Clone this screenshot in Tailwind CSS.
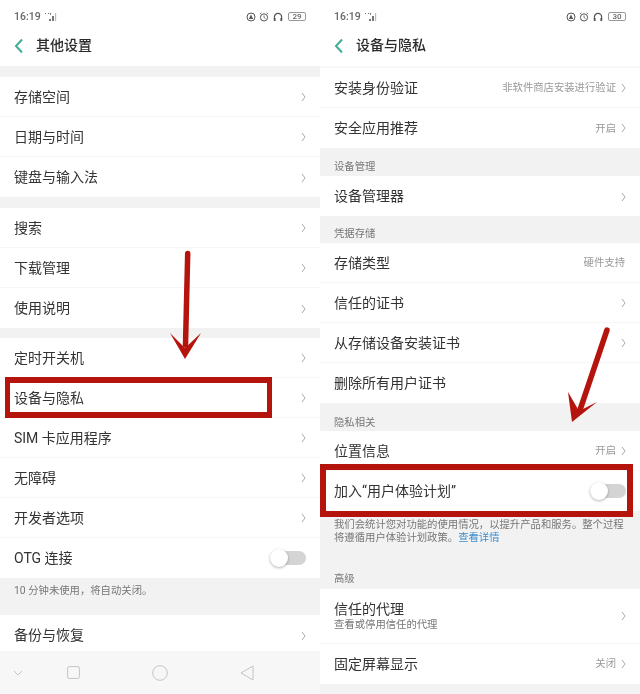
<!DOCTYPE html>
<html lang="zh"><head><meta charset="utf-8"><script src="https://cdn.jsdelivr.net/npm/@tailwindcss/browser@4"></script></head>
<body class="m-0 bg-white">
<div class="relative w-[640px] h-[694px] overflow-hidden flex blur-[0.35px] font-['Roboto','Noto_Sans_CJK_SC',sans-serif] text-[#333]">

<!-- LEFT -->
<section class="relative w-[320px] h-[694px] overflow-hidden flex flex-col bg-[#f2f2f2]">
  <div class="bg-white h-[66px] shrink-0 px-[14px] flex flex-col">
    <div class="h-[33px] flex items-center text-[10.5px] font-medium text-[#666]">
      <span>16:19</span>
      <svg class="ml-[3px]" width="14" height="10" viewBox="0 0 14 10"><g fill="#777"><rect x="1" y="1" width="1" height="1"/><rect x="4" y="1" width="1" height="1"/><rect x="6" y="1" width="1" height="2"/><rect x="5" y="7" width="2" height="2"/><rect x="8" y="4" width="2" height="5"/><rect x="11" y="1" width="1.2" height="8" fill="#bbb"/></g></svg>
      <div class="ml-auto flex items-center gap-[3px]">
        <svg width="10" height="10" viewBox="0 0 10 10"><circle cx="5" cy="5" r="4" fill="none" stroke="#555"/><path d="M2.8 7h4.4L5 2.6z" fill="#555"/></svg>
        <svg width="10" height="10" viewBox="0 0 10 10"><circle cx="5" cy="5.4" r="3.6" fill="none" stroke="#555"/><path d="M5 3.5v2l1.4 1M.8 2 2.4.6M9.2 2 7.6.6" fill="none" stroke="#555" stroke-width=".8"/></svg>
        <svg width="10" height="10" viewBox="0 0 10 10" class="ml-[1px]"><path d="M1.4 7V5a3.6 3.6 0 0 1 7.2 0v2" fill="none" stroke="#555" stroke-width="1.2"/><rect x=".8" y="6" width="1.8" height="3" fill="#555"/><rect x="7.4" y="6" width="1.8" height="3" fill="#555"/></svg>
        <span class="ml-[2px] w-[18px] h-[9px] border border-[#999] rounded-[2px] text-[8px] leading-[7px] text-center text-[#666]">29</span>
      </div>
    </div>
    <div class="h-[25px] flex items-center">
      <svg width="10" height="16" viewBox="0 0 10 16"><path d="M8 1.5 2 8l6 6.5" fill="none" stroke="#3fae96" stroke-width="2"/></svg>
      <span class="ml-[12px] text-[14px] font-medium text-[#2b2b2b]">其他设置</span>
    </div>
  </div>
  <div class="h-[11px] shrink-0"></div>
  <div class="bg-white flex flex-col divide-y divide-[#f7f7f7] shrink-0">
    <div class="h-10 pt-[1px] flex items-center pl-[14px] pr-[14px] justify-between text-[14px]"><span>存储空间</span><svg width="5" height="10" viewBox="0 0 5 10"><path d="M1 1l3 4-3 4" fill="none" stroke="#aaa"/></svg></div>
    <div class="h-10 pt-[1px] flex items-center pl-[14px] pr-[14px] justify-between text-[14px]"><span>日期与时间</span><svg width="5" height="10" viewBox="0 0 5 10"><path d="M1 1l3 4-3 4" fill="none" stroke="#aaa"/></svg></div>
    <div class="h-10 pt-[1px] flex items-center pl-[14px] pr-[14px] justify-between text-[14px]"><span>键盘与输入法</span><svg width="5" height="10" viewBox="0 0 5 10"><path d="M1 1l3 4-3 4" fill="none" stroke="#aaa"/></svg></div>
  </div>
  <div class="h-[11px] shrink-0"></div>
  <div class="bg-white flex flex-col divide-y divide-[#f7f7f7] shrink-0">
    <div class="h-10 pt-[1px] flex items-center pl-[14px] pr-[14px] justify-between text-[14px]"><span>搜索</span><svg width="5" height="10" viewBox="0 0 5 10"><path d="M1 1l3 4-3 4" fill="none" stroke="#aaa"/></svg></div>
    <div class="h-10 pt-[1px] flex items-center pl-[14px] pr-[14px] justify-between text-[14px]"><span>下载管理</span><svg width="5" height="10" viewBox="0 0 5 10"><path d="M1 1l3 4-3 4" fill="none" stroke="#aaa"/></svg></div>
    <div class="h-10 pt-[1px] flex items-center pl-[14px] pr-[14px] justify-between text-[14px]"><span>使用说明</span><svg width="5" height="10" viewBox="0 0 5 10"><path d="M1 1l3 4-3 4" fill="none" stroke="#aaa"/></svg></div>
  </div>
  <div class="h-[10px] shrink-0"></div>
  <div class="bg-white flex flex-col divide-y divide-[#f7f7f7] shrink-0">
    <div class="h-10 pt-[1px] flex items-center pl-[14px] pr-[14px] justify-between text-[14px]"><span>定时开关机</span><svg width="5" height="10" viewBox="0 0 5 10"><path d="M1 1l3 4-3 4" fill="none" stroke="#aaa"/></svg></div>
    <div class="h-10 pt-[1px] flex items-center pl-[14px] pr-[14px] justify-between text-[14px]"><span>设备与隐私</span><svg width="5" height="10" viewBox="0 0 5 10"><path d="M1 1l3 4-3 4" fill="none" stroke="#aaa"/></svg></div>
    <div class="h-10 pt-[1px] flex items-center pl-[14px] pr-[14px] justify-between text-[14px]"><span>SIM 卡应用程序</span><svg width="5" height="10" viewBox="0 0 5 10"><path d="M1 1l3 4-3 4" fill="none" stroke="#aaa"/></svg></div>
    <div class="h-10 pt-[1px] flex items-center pl-[14px] pr-[14px] justify-between text-[14px]"><span>无障碍</span><svg width="5" height="10" viewBox="0 0 5 10"><path d="M1 1l3 4-3 4" fill="none" stroke="#aaa"/></svg></div>
    <div class="h-10 pt-[1px] flex items-center pl-[14px] pr-[14px] justify-between text-[14px]"><span>开发者选项</span><svg width="5" height="10" viewBox="0 0 5 10"><path d="M1 1l3 4-3 4" fill="none" stroke="#aaa"/></svg></div>
    <div class="h-10 flex items-center pl-[14px] pr-[14px] justify-between text-[14px]"><span>OTG 连接</span>
      <div class="relative w-[36px] h-[14px] rounded-full bg-[#d4d4d4]"><div class="absolute left-0 -top-[2px] w-[18px] h-[18px] rounded-full bg-white shadow-[0_1px_3px_rgba(0,0,0,.3)]"></div></div>
    </div>
  </div>
  <div class="h-[37px] shrink-0 pl-[14px] pt-[5px] text-[10.35px] leading-[16px] text-[#777]">10 分钟未使用，将自动关闭。</div>
  <div class="bg-white h-[36px] pt-[5px] shrink-0 flex items-center pl-[14px] pr-[14px] justify-between text-[14px]"><span>备份与恢复</span><svg width="5" height="10" viewBox="0 0 5 10"><path d="M1 1l3 4-3 4" fill="none" stroke="#aaa"/></svg></div>
  <div class="flex-1 bg-[#f7f7f7] flex items-center">
    <svg class="ml-[13px]" width="10" height="6" viewBox="0 0 10 6"><path d="M1 1l4 4 4-4" fill="none" stroke="#c4c4c4"/></svg>
    <svg class="ml-[44px]" width="13" height="13" viewBox="0 0 13 13"><rect x=".6" y=".6" width="11.8" height="11.8" rx="1.5" fill="none" stroke="#c4c4c4"/></svg>
    <svg class="ml-[72px]" width="16" height="16" viewBox="0 0 16 16"><circle cx="8" cy="8" r="7.3" fill="none" stroke="#c4c4c4"/></svg>
    <svg class="ml-[72px]" width="14" height="16" viewBox="0 0 14 16"><path d="M13 1v14L1 8z" fill="none" stroke="#c4c4c4"/></svg>
  </div>
  <!-- annotations -->
  <div class="absolute left-[5px] top-[377px] w-[267px] h-[41px] border-x-[5px] border-y-[6px] border-[#b5140c]"></div>
  <svg class="absolute left-[165px] top-[245px]" width="42" height="120" viewBox="0 0 42 120"><path d="M22.7 8.5 20.5 100" fill="none" stroke="#b5140c" stroke-width="5.5" stroke-linecap="round"/><path d="M5 88 20 114 36 88 20 103z" fill="#b5140c"/></svg>
</section>

<!-- RIGHT -->
<section class="relative w-[320px] h-[694px] overflow-hidden flex flex-col bg-[#f2f2f2]">
  <div class="bg-white h-[66px] shrink-0 px-[14px] flex flex-col">
    <div class="h-[33px] flex items-center text-[10.5px] font-medium text-[#666]">
      <span>16:19</span>
      <svg class="ml-[3px]" width="14" height="10" viewBox="0 0 14 10"><g fill="#777"><rect x="1" y="1" width="1" height="1"/><rect x="4" y="1" width="1" height="1"/><rect x="6" y="1" width="1" height="2"/><rect x="5" y="7" width="2" height="2"/><rect x="8" y="4" width="2" height="5"/><rect x="11" y="1" width="1.2" height="8" fill="#bbb"/></g></svg>
      <div class="ml-auto flex items-center gap-[3px]">
        <svg width="10" height="10" viewBox="0 0 10 10"><circle cx="5" cy="5" r="4" fill="none" stroke="#555"/><path d="M2.8 7h4.4L5 2.6z" fill="#555"/></svg>
        <svg width="10" height="10" viewBox="0 0 10 10"><circle cx="5" cy="5.4" r="3.6" fill="none" stroke="#555"/><path d="M5 3.5v2l1.4 1M.8 2 2.4.6M9.2 2 7.6.6" fill="none" stroke="#555" stroke-width=".8"/></svg>
        <svg width="10" height="10" viewBox="0 0 10 10" class="ml-[1px]"><path d="M1.4 7V5a3.6 3.6 0 0 1 7.2 0v2" fill="none" stroke="#555" stroke-width="1.2"/><rect x=".8" y="6" width="1.8" height="3" fill="#555"/><rect x="7.4" y="6" width="1.8" height="3" fill="#555"/></svg>
        <span class="ml-[2px] w-[18px] h-[9px] border border-[#999] rounded-[2px] text-[8px] leading-[7px] text-center text-[#666]">30</span>
      </div>
    </div>
    <div class="h-[25px] flex items-center">
      <svg width="10" height="16" viewBox="0 0 10 16"><path d="M8 1.5 2 8l6 6.5" fill="none" stroke="#3fae96" stroke-width="2"/></svg>
      <span class="ml-[12px] text-[14px] font-medium text-[#2b2b2b]">设备与隐私</span>
    </div>
  </div>
  <div class="h-[2px] bg-[#f8f8f8] shrink-0"></div>
  <div class="bg-white flex flex-col divide-y divide-[#f7f7f7] shrink-0">
    <div class="h-10 pt-[1px] flex items-center pl-[14px] pr-[14px] justify-between text-[14px]"><span>安装身份验证</span><span class="flex items-center gap-[5px] text-[10.35px] text-[#999]">非软件商店安装进行验证<svg width="5" height="10" viewBox="0 0 5 10"><path d="M1 1l3 4-3 4" fill="none" stroke="#aaa"/></svg></span></div>
    <div class="h-10 pt-[1px] flex items-center pl-[14px] pr-[14px] justify-between text-[14px]"><span>安全应用推荐</span><span class="flex items-center gap-[5px] text-[10.35px] text-[#999]">开启<svg width="5" height="10" viewBox="0 0 5 10"><path d="M1 1l3 4-3 4" fill="none" stroke="#aaa"/></svg></span></div>
  </div>
  <div class="h-[28px] shrink-0 pl-[14px] pt-[11px] text-[10.35px] leading-[16px] text-[#777]">设备管理</div>
  <div class="bg-white h-10 pt-[1px] shrink-0 flex items-center pl-[14px] pr-[14px] justify-between text-[14px]"><span>设备管理器</span><svg width="5" height="10" viewBox="0 0 5 10"><path d="M1 1l3 4-3 4" fill="none" stroke="#aaa"/></svg></div>
  <div class="h-[27px] shrink-0 pl-[14px] pt-[10px] text-[10.35px] leading-[16px] text-[#777]">凭据存储</div>
  <div class="bg-white flex flex-col divide-y divide-[#f7f7f7] shrink-0">
    <div class="h-10 pt-[1px] flex items-center pl-[14px] pr-[14px] justify-between text-[14px]"><span>存储类型</span><span class="pr-[1px] text-[10.35px] text-[#999]">硬件支持</span></div>
    <div class="h-10 pt-[1px] flex items-center pl-[14px] pr-[14px] justify-between text-[14px]"><span>信任的证书</span><svg width="5" height="10" viewBox="0 0 5 10"><path d="M1 1l3 4-3 4" fill="none" stroke="#aaa"/></svg></div>
    <div class="h-10 pt-[1px] flex items-center pl-[14px] pr-[14px] justify-between text-[14px]"><span>从存储设备安装证书</span><svg width="5" height="10" viewBox="0 0 5 10"><path d="M1 1l3 4-3 4" fill="none" stroke="#aaa"/></svg></div>
    <div class="h-10 flex items-center pl-[14px] pr-[14px] justify-between text-[14px]"><span>删除所有用户证书</span></div>
  </div>
  <div class="h-[28px] shrink-0 pl-[14px] pt-[12px] text-[10.35px] leading-[16px] text-[#777]">隐私相关</div>
  <div class="bg-white flex flex-col divide-y divide-[#f7f7f7] shrink-0">
    <div class="h-10 pt-[1px] flex items-center pl-[14px] pr-[14px] justify-between text-[14px]"><span>位置信息</span><span class="flex items-center gap-[5px] text-[10.35px] text-[#999]">开启<svg width="5" height="10" viewBox="0 0 5 10"><path d="M1 1l3 4-3 4" fill="none" stroke="#aaa"/></svg></span></div>
    <div class="h-10 flex items-center pl-[14px] pr-[14px] justify-between text-[14px]"><span>加入“用户体验计划”</span>
      <div class="relative w-[36px] h-[14px] rounded-full bg-[#d4d4d4]"><div class="absolute left-0 -top-[2px] w-[18px] h-[18px] rounded-full bg-white shadow-[0_1px_3px_rgba(0,0,0,.3)]"></div></div>
    </div>
  </div>
  <div class="h-[52px] shrink-0 pl-[14px] pr-[10px] pt-[7px] text-[10.35px] leading-[13px] text-[#777]">我们会统计您对功能的使用情况，以提升产品和服务。整个过程<br>将遵循用户体验计划政策。<span class="text-[#3a8fd0]">查看详情</span></div>
  <div class="h-[26px] shrink-0 pl-[14px] pt-[8px] text-[10.35px] leading-[16px] text-[#777]">高级</div>
  <div class="bg-white flex flex-col divide-y divide-[#f7f7f7] shrink-0">
    <div class="h-[55px] flex items-center pl-[14px] pr-[14px] justify-between"><div class="flex flex-col"><span class="text-[14px] leading-[17px]">信任的代理</span><span class="text-[10.35px] leading-[14px] text-[#777]">查看或停用信任的代理</span></div><svg width="5" height="10" viewBox="0 0 5 10"><path d="M1 1l3 4-3 4" fill="none" stroke="#aaa"/></svg></div>
    <div class="h-10 flex items-center pl-[14px] pr-[14px] justify-between text-[14px]"><span>固定屏幕显示</span><span class="flex items-center gap-[5px] text-[10.35px] text-[#999]">关闭<svg width="5" height="10" viewBox="0 0 5 10"><path d="M1 1l3 4-3 4" fill="none" stroke="#aaa"/></svg></span></div>
  </div>
  <!-- annotations -->
  <div class="absolute left-0 top-[464px] w-[313px] h-[53px] border-[6px] border-[#b5140c]"></div>
  <svg class="absolute left-[245px] top-[320px]" width="50" height="110" viewBox="0 0 50 110"><path d="M42 10 15 90" fill="none" stroke="#b5140c" stroke-width="5.5" stroke-linecap="round"/><path d="M3 72 7 102 32 82 14 91z" fill="#b5140c"/></svg>
</section>
</div>
</body></html>
